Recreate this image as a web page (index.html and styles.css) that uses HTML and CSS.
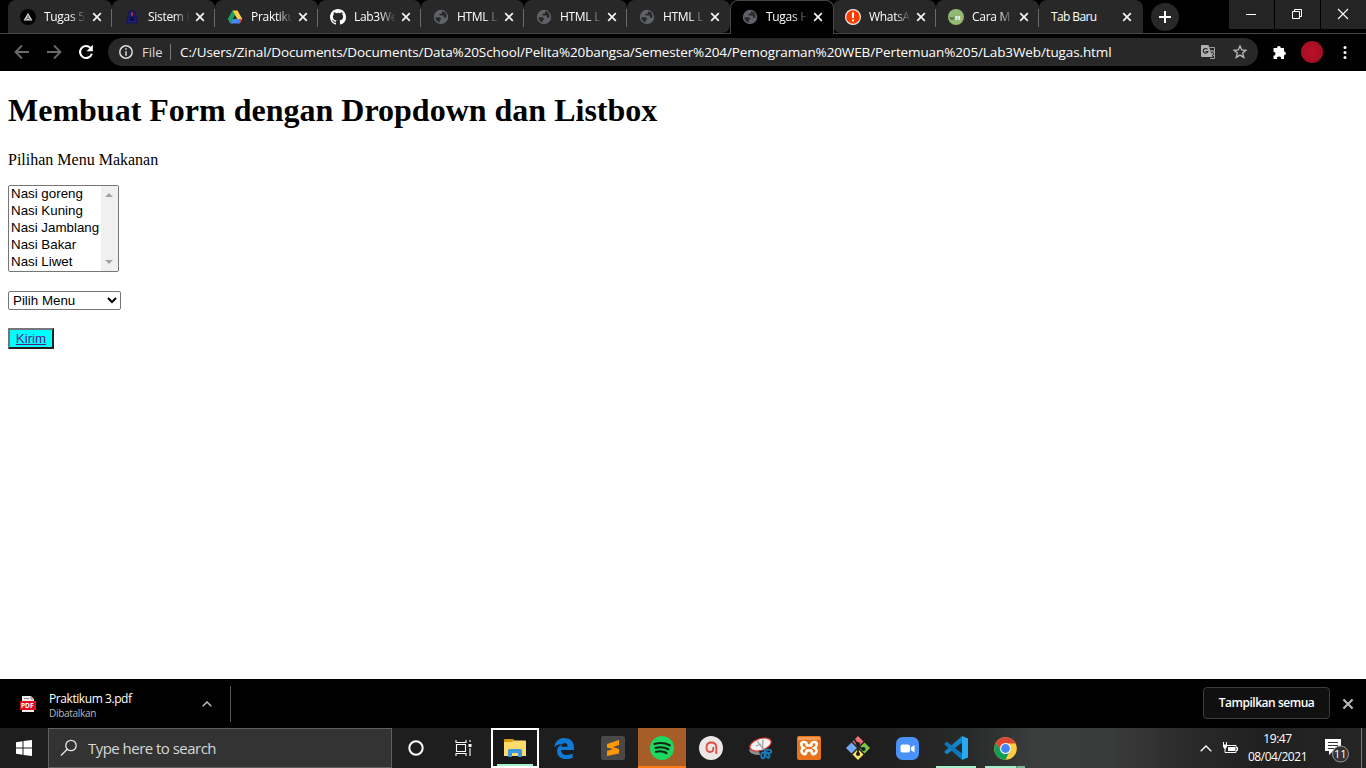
FILE: index.html
```html
<!DOCTYPE html>
<html lang="id">
<head>
<meta charset="utf-8">
<title>Tugas HTML</title>
<link rel="stylesheet" href="styles.css">
</head>
<body>
<svg class="defs" width="0" height="0">
  <symbol id="x" viewBox="0 0 10 10"><path d="M1.2 1.2l7.6 7.6M8.800 1.2L1.2 8.800" stroke="currentColor" stroke-width="1.700" fill="none"/></symbol>
  <symbol id="globe" viewBox="0 0 16 16"><circle cx="8" cy="8" r="7.200" fill="#5f6368"/><path d="M2.300 8.200h4q2.200.3 2.200 2.300H6.800v3q-4-1-4.500-5.300zM9 2.300v1.500q0 1-1.200 1H6.500v1.700h4.300v2.300h2.500q.8-4-2-5.800z" fill="#28282a"/></symbol>
</svg>
<header class="tabstrip">
  <div class="tabs">
    <div class="tab first"><svg class="fav" viewBox="0 0 16 16"><circle cx="8" cy="8" r="8" fill="#000"/><path d="M8 4l4.500 7.500h-9z" fill="#ddd"/><path d="M8 6.500v2.500M5.500 10.500L8 9l2.500 1.500" stroke="#333" stroke-width=".9" fill="none"/></svg><span class="title">Tugas 5</span><svg class="close"><use href="#x"/></svg></div>
    <div class="tab"><svg class="fav" viewBox="0 0 16 16"><path d="M8 1q5 1 5 7l1 6.500H2L3 8q0-6 5-7z" fill="#17175c"/><path d="M5 6q3-3 6 0M4 10l3-1M12 10L9 9M3 12.500h10" stroke="#23238a" fill="none"/><path d="M8 3v4" stroke="#b83126" stroke-width="1.600"/><circle cx="8" cy="10" r="1.800" fill="#070744"/></svg><span class="title">Sistem I</span><svg class="close"><use href="#x"/></svg></div>
    <div class="tab"><svg class="fav" viewBox="0 0 16 16"><path d="M5.500 1.500L.8 10l2.500 4.500L8 6z" fill="#1da462"/><path d="M5.500 1.500h5L15.300 10h-5z" fill="#ffcf48"/><path d="M5.700 10h9.600l-2.500 4.500H3.300z" fill="#4688f4"/><path d="M12 10h3.300l-2.500 4.500z" fill="#e94435"/></svg><span class="title">Praktiku</span><svg class="close"><use href="#x"/></svg></div>
    <div class="tab"><svg class="fav" viewBox="0 0 16 16"><path fill="#fff" d="M8 0C3.580 0 0 3.580 0 8c0 3.540 2.290 6.530 5.470 7.590.4.07.55-.17.55-.38 0-.19-.01-.82-.01-1.490-2.010.37-2.530-.49-2.690-.94-.09-.23-.48-.94-.82-1.130-.28-.15-.68-.52-.01-.53.63-.01 1.080.58 1.230.82.72 1.210 1.870.87 2.330.66.07-.52.28-.87.51-1.070-1.780-.2-3.640-.89-3.640-3.950 0-.87.31-1.590.82-2.150-.08-.2-.36-1.020.08-2.120 0 0 .67-.21 2.200.82a7.600 7.600 0 0 1 4 0c1.530-1.040 2.200-.82 2.200-.82.44 1.100.16 1.920.08 2.120.51.56.82 1.270.82 2.150 0 3.070-1.870 3.750-3.650 3.950.29.25.54.73.54 1.480 0 1.070-.01 1.930-.01 2.200 0 .21.15.46.55.38A8 8 0 0 0 16 8c0-4.420-3.580-8-8-8z"/></svg><span class="title">Lab3We</span><svg class="close"><use href="#x"/></svg></div>
    <div class="tab"><svg class="fav"><use href="#globe"/></svg><span class="title">HTML L</span><svg class="close"><use href="#x"/></svg></div>
    <div class="tab"><svg class="fav"><use href="#globe"/></svg><span class="title">HTML L</span><svg class="close"><use href="#x"/></svg></div>
    <div class="tab before-active"><svg class="fav"><use href="#globe"/></svg><span class="title">HTML L</span><svg class="close"><use href="#x"/></svg></div>
    <div class="tab active"><svg class="fav"><use href="#globe"/></svg><span class="title">Tugas H</span><svg class="close"><use href="#x"/></svg></div>
    <div class="tab after-active"><svg class="fav" viewBox="0 0 16 16"><circle cx="8" cy="8" r="7.400" fill="#ff3c00" stroke="#eee" stroke-width="1.200"/><path d="M8 3.500v5.500M8 10.500v2" stroke="#fff" stroke-width="2"/></svg><span class="title">WhatsA</span><svg class="close"><use href="#x"/></svg></div>
    <div class="tab"><svg class="fav" viewBox="0 0 16 16"><circle cx="8" cy="8" r="8" fill="#93b874"/><text x="1.500" y="10.500" class="wikih dark">w</text><text x="7" y="11" class="wikih">H</text></svg><span class="title">Cara M</span><svg class="close"><use href="#x"/></svg></div>
    <div class="tab last"><span class="title">Tab Baru</span><svg class="close"><use href="#x"/></svg></div>
  </div>
  <div class="newtab"><svg width="12" height="12"><path d="M6 0v12M0 6h12" stroke="#fff" stroke-width="2"/></svg></div>
  <div class="winbtns">
    <span><svg width="12" height="12"><path d="M1 6.500h10" stroke="#fff"/></svg></span>
    <span><svg width="12" height="12" fill="none" stroke="#fff"><path d="M1.500 3.500h7v7h-7zM3.500 3.500v-2h7v7h-2"/></svg></span>
    <span><svg width="12" height="12"><path d="M1 1l10 10M11 1L1 11" stroke="#fff" stroke-width="1.100"/></svg></span>
  </div>
</header>
<nav class="toolbar">
  <svg class="nav" viewBox="0 0 16 16"><path d="M15 8H2M8 1.500L1.500 8 8 14.500" stroke="#6b6b6b" stroke-width="1.800" fill="none"/></svg>
  <svg class="nav" viewBox="0 0 16 16"><path d="M1 8h13M8 1.500L14.500 8 8 14.500" stroke="#6b6b6b" stroke-width="1.800" fill="none"/></svg>
  <svg class="nav" viewBox="0 0 16 16"><path d="M12.500 4A6 6 0 1 0 13.800 9.800" stroke="#fff" stroke-width="2.100" fill="none"/><path d="M14.800.8v6.400H8.500z" fill="#fff"/></svg>
  <div class="omnibox">
    <svg class="info" width="14" height="14" fill="none" stroke="#ddd" stroke-width="1.500"><circle cx="7" cy="7" r="6.200"/><path d="M7 3.200v1.600M7 6.200v4.600"/></svg>
    <span class="scheme">File</span><i class="bar"></i>
    <span class="url">C:/Users/Zinal/Documents/Documents/Data%20School/Pelita%20bangsa/Semester%204/Pemograman%20WEB/Pertemuan%205/Lab3Web/tugas.html</span>
    <svg class="translate" width="15" height="15"><path d="M0 1q0-1 1-1h6.500l4 12H1q-1 0-1-1z" fill="#b0b0b0"/><path d="M8.500 2.500h5v11H9" fill="none" stroke="#a0a0a0"/><path d="M6.500 4.500a2.300 2.300 0 1 0 .3 2H4.500" stroke="#29292b" fill="none" stroke-width="1.200"/><path d="M9.500 6h3.500M11 5v1M12.500 6.500q-.6 2.500-2 3.500M10.500 8q1 2 2.500 2.800" stroke="#bbb" fill="none" stroke-width=".9"/></svg>
    <svg width="14" height="14" viewBox="0 0 14 14"><path d="M7 1l1.700 4 4.300.3-3.300 2.800 1.100 4.300L7 10.100l-3.800 2.300 1.100-4.300L1 5.300 5.300 5z" fill="none" stroke="#bdbdbd" stroke-width="1.300"/></svg>
  </div>
  <svg class="ext" width="15" height="15" viewBox="0 0 15 15"><path d="M2 3h3a1.900 1.900 0 1 1 3.800 0H12v3.400a1.900 1.900 0 1 1 0 3.800V14H9a2 2 0 1 0-3.900 0H1.500v-3.300a1.900 1.900 0 1 0 0-4V3z" fill="#fff"/></svg>
  <div class="avatar"></div>
  <svg class="dots" width="4" height="14" fill="#fff"><circle cx="2" cy="2.500" r="1.500"/><circle cx="2" cy="7.500" r="1.500"/><circle cx="2" cy="12.500" r="1.500"/></svg>
</nav>
<main class="page">
  <h1>Membuat Form dengan Dropdown dan Listbox</h1>
  <p class="label">Pilihan Menu Makanan</p>
  <div class="listbox">
    <ul><li>Nasi goreng</li><li>Nasi Kuning</li><li>Nasi Jamblang</li><li>Nasi Bakar</li><li>Nasi Liwet</li></ul>
    <div class="scroll"><svg width="8" height="4"><path d="M0 4l4-4 4 4z" fill="#a3a3a3"/></svg><svg width="8" height="4"><path d="M0 0l4 4 4-4z" fill="#a3a3a3"/></svg></div>
  </div>
  <select class="dropdown"><option>Pilih Menu</option></select>
  <button class="send"><a>Kirim</a></button>
</main>
<section class="downloads">
  <svg class="pdf" width="16" height="16"><path d="M2 0h9l3 3v13H2z" fill="#eee"/><path d="M11 0v3h3M4 2.500h5" stroke="#888" fill="none"/><rect y="5" width="16" height="9" fill="#e30b20"/><text x="1" y="12.300" class="pdftext">PDF</text></svg>
  <div class="file"><b>Praktikum 3.pdf</b><small>Dibatalkan</small></div>
  <svg class="up" width="10" height="6"><path d="M.7 5.300L5 1l4.300 4.300" stroke="#bbb" stroke-width="1.500" fill="none"/></svg>
  <i class="divider"></i>
  <button class="all">Tampilkan semua</button>
  <svg class="shelfclose"><use href="#x"/></svg>
</section>
<footer class="taskbar">
  <div class="start"><svg width="16" height="16" fill="#fff"><path d="M0 2.200L6.500 1.300v6.200H0zM7.500 1.100L16 0v7.500H7.500zM0 8.500h6.500v6.200L0 13.800zM7.500 8.500H16V16l-8.500-1.100z"/></svg></div>
  <div class="search"><svg width="18" height="18" fill="none" stroke="#e8e8e8" stroke-width="1.300"><circle cx="11" cy="6.500" r="5.200"/><path d="M7.200 10.300L1 16.500"/></svg><span>Type here to search</span></div>
  <div class="app"><svg width="16" height="16"><circle cx="8" cy="8" r="6.700" fill="none" stroke="#fff" stroke-width="2"/></svg></div>
  <div class="app view"><svg width="17" height="16" fill="none" stroke="#fff" stroke-width="1.100"><path d="M1 0v2.500h10V0M1 16v-2.500h10V16M1.500 4.500h9v7h-9zM15 0v2M15 8v8"/><path d="M13.500 4h3v3h-3z" fill="#fff" stroke="none"/></svg></div>
  <div class="app explorer"><svg width="22" height="18"><path d="M0 1q0-1 1-1h8l2 2.500h10V8H0z" fill="#d89b12"/><path d="M0 3h8l2-1.500h11q1 0 1 1V17H0z" fill="#ffdb6b"/><path d="M4 18v-6.500q0-1.500 1.500-1.500h11q1.500 0 1.500 1.500V18h-4v-4H8v4z" fill="#3a96dd"/></svg></div>
  <div class="app"><svg width="20" height="21" viewBox="0 0 20 21"><path d="M0 9.500Q1.500 0 10.500 0 20 .5 20 10v2H7q.4 5 5.600 5 3.400 0 6-1.600V20q-3 1.300-7 1.200-8.500-.7-8.600-8Q3.200 8.500 8 6 3 6.300 0 9.500zM7.200 8.800h6.600Q13.500 5 10.500 5 7.700 5.500 7.200 8.800z" fill="#0f7bd8" fill-rule="evenodd"/></svg></div>
  <div class="app"><svg width="24" height="24"><rect width="24" height="24" rx="2" fill="#494949"/><path d="M6 8l12-4v5l-6 2 6 2v4.500L6 20v-5l6-2-6-1.500z" fill="#ff9800"/></svg></div>
  <div class="app spotify"><svg width="24" height="24"><circle cx="12" cy="12" r="12" fill="#1ed760"/><path d="M4.500 8q8-2.500 15.200 1.300M5.500 12q7-2 12.800 1.200M6 15.800q6-1.500 10.500 1.200" stroke="#102516" stroke-width="2.200" stroke-linecap="round" fill="none"/></svg></div>
  <div class="app"><svg width="24" height="24"><circle cx="12" cy="12" r="12" fill="#ece7e5"/><path d="M17.300 18V11.500Q17.300 6.500 12.300 6.500 7.500 6.500 7.500 11.500 7.500 16 11 16 14.300 16 14.300 12.500V11" stroke="#e04e43" stroke-width="1.800" fill="none"/></svg></div>
  <div class="app"><svg width="25" height="23"><path d="M1 12q0 6 11 6l-1-4z" fill="#8d8d8d"/><ellipse cx="12.500" cy="7.500" rx="11" ry="5.800" transform="rotate(-18 12.500 7.500)" fill="#f4f4f4" stroke="#d43434" stroke-width="1.200"/><path d="M9 4l7 9M15 2.500l-.5 11M8 9l5-2" stroke="#999" stroke-width="1.200"/><g fill="none" stroke="#157dbe" stroke-width="1.800"><ellipse cx="20" cy="14.500" rx="3.300" ry="1.800"/><ellipse cx="15" cy="18.500" rx="1.800" ry="2.800"/><ellipse cx="19.300" cy="18" rx="1.600" ry="3" transform="rotate(-30 19.300 18)"/></g></svg></div>
  <div class="app"><svg width="24" height="24"><rect width="24" height="24" rx="2" fill="#e9731d"/><path d="M1 1h22v3H1z" fill="#f49b58"/><path d="M9 9.500h6M9 14.500h6M9.500 10q1-4-2.500-4T4.500 9q0 2 2 3-2 1-2 3t2.500 3 2.500-4M14.500 10q-1-4 2.500-4t2.500 3q0 2-2 3 2 1 2 3T17 18t-2.500-4" stroke="#fff" stroke-width="2.600" fill="none"/></svg></div>
  <div class="app"><svg width="24" height="24"><path d="M12 0l5.500 5.500L12 11 6.500 5.500z" fill="#f06f72"/><path d="M5.500 6.500L11 12l-5.500 5.500L0 12z" fill="#74a9f6"/><path d="M18.500 6.500L24 12l-5.500 5.500L13 12z" fill="#79c94d"/><path d="M12 13l5.500 5.500L12 24l-5.500-5.500z" fill="#ffe16b"/><path d="M8 3l4 6v10M12 10l6 4" stroke="#222" stroke-width="1.800" fill="none"/><g fill="#1c1c1c"><circle cx="12" cy="8" r="2"/><circle cx="12" cy="18" r="2"/><circle cx="17.500" cy="13" r="2"/></g></svg></div>
  <div class="app"><svg width="23" height="23"><rect width="23" height="23" rx="6.500" fill="#4b91fa"/><rect x="4.500" y="7.500" width="9.500" height="8" rx="2" fill="#fff"/><path d="M14.800 10.500L18.500 8v7.500l-3.700-2.500z" fill="#fff"/></svg></div>
  <div class="app running"><svg width="24" height="24"><path d="M18 0v6.500L3 18.200 0 16z" fill="#1684c9"/><path d="M0 8l3-2.200L18 17.500V24z" fill="#0d77ba"/><path d="M18 0l6 2.500v19L18 24z" fill="#29a9f0"/></svg></div>
  <div class="app running chrome"><svg width="23" height="23" viewBox="-11.500 -11.500 23 23"><circle r="11.300" fill="#ffcd42"/><path d="M0-5h10.100A11.300 11.300 0 0 0-9.800-5.600L-4.300 2.500z" fill="#db4637"/><path d="M-9.800-5.600A11.300 11.300 0 0 0 0 11.300L4.300 2.500h-8.600z" fill="#109d59"/><circle r="5.500" fill="#f4f4f4"/><circle r="4.400" fill="#4285f4"/></svg></div>
  <div class="tray">
    <svg class="chev" width="12" height="7"><path d="M.7 6.300L6 1l5.300 5.300" stroke="#fff" stroke-width="1.300" fill="none"/></svg>
    <svg class="battery" width="17" height="12"><path d="M4.500 3.500h9.500v7H5M14 5.500h1.500v3H14" stroke="#fff" fill="none"/><path d="M6 5h7v4H6zM1 2.500h4v3H4L3.500 7h-1L2 5.500H1z" fill="#fff"/><path d="M1.500 0v3M4.500 0v3M3 6v4.500h2" stroke="#fff" fill="none"/></svg>
    <div class="clock"><span>19:47</span><span class="date">08/04/2021</span></div>
    <svg class="notify" width="26" height="26"><path d="M1 2h16v12H9l-4 4v-4H1z" fill="#fff"/><path d="M4 5.500h10M4 8.500h10M4 11.500h6" stroke="#333"/><circle cx="16.500" cy="17" r="8" fill="#343434" stroke="#999"/><text x="16.300" y="21" class="count">11</text></svg>
  </div>
</footer>
</body>
</html>
```
FILE: styles.css
```css
* { box-sizing: border-box; }
body { margin: 0; width: 1366px; height: 768px; overflow: hidden; display: flex; flex-direction: column; background: #fff; font-family: "Open Sans", "Noto Sans", sans-serif; font-size: 12px; color: #fff; }
svg { display: block; flex: none; }
.defs { position: absolute; }

.tabstrip { height: 34px; background: #000; display: flex; border-bottom: 1px solid #464646; padding-left: 8px; flex: none; }
.tabs { display: flex; height: 34px; }
.tab { width: 103px; height: 33px; background: #282828; border-radius: 8px 8px 0 0; display: flex; align-items: center; padding-left: 12px; position: relative; }
.tab.first { width: 104px; }
.tab::after { content: ""; position: absolute; right: 0; top: 9px; width: 1px; height: 18px; background: #6a6a6a; }
.tab.active { background: #000; border: 1px solid #464646; border-bottom: 0; height: 34px; width: 104px; margin-right: -1px; padding: 0 0 1px 11px; z-index: 1; }
.before-active { border-bottom-right-radius: 8px; }
.after-active { border-bottom-left-radius: 8px; }
.tab.active::after, .tab.before-active::after, .tab.last::after { display: none; }
.tab.last { width: 104px; padding-left: 12px; }
.fav { width: 16px; height: 16px; }
.title { margin-left: 8px; width: 45px; height: 18px; line-height: 18px; white-space: nowrap; letter-spacing: -.3px; -webkit-mask-image: linear-gradient(90deg, #000 58%, transparent 93%); mask-image: linear-gradient(90deg, #000 58%, transparent 93%); }
.last .title { margin: 0; width: 71px; letter-spacing: -.6px; -webkit-mask-image: none; mask-image: none; }
.close { width: 10px; height: 10px; margin-left: 2px; color: #f4f4f4; }
.first .close { margin-left: 3px; }
.last .close { margin-left: 0; }
.wikih { font: bold 7px "Liberation Serif", serif; fill: #fff; }
.wikih.dark { fill: #3e5533; }
.newtab { width: 28px; height: 28px; border-radius: 50%; background: #282828; margin: 3px 0 0 8px; display: flex; align-items: center; justify-content: center; }
.winbtns { margin-left: auto; display: flex; gap: 1px; }
.winbtns span { width: 45px; height: 29px; background: #242424; display: flex; align-items: center; justify-content: center; padding: 0 2px 1px 0; }

.toolbar { height: 37px; background: #000; display: flex; align-items: center; padding: 0 0 1px 14px; flex: none; }
.nav { width: 16px; height: 16px; margin-right: 16px; }
.nav:nth-child(3) { margin-right: 14px; }
.omnibox { width: 1150px; height: 28px; border-radius: 14px; background: #282828; display: flex; align-items: center; padding: 0 11px; }
.scheme { margin-left: 9px; width: 28px; font-size: 13px; color: #ddd; }
.bar { width: 1px; height: 16px; background: #777; margin-right: 9px; }
.url { width: 1021px; white-space: nowrap; font-size: 13.5px; letter-spacing: -.115px; }
.translate { margin-right: 17px; }
.ext { margin-left: 14px; }
.avatar { width: 22px; height: 22px; border-radius: 50%; background: radial-gradient(#bb1128, #9e0d22); margin-left: 14px; }
.dots { margin-left: 20px; }

.page { height: 608px; color: #000; padding: 21px 8px 0; font-family: "Liberation Serif", serif; flex: none; display: flex; flex-direction: column; align-items: flex-start; }
h1 { margin: 0; font-size: 32px; line-height: 37px; }
.label { margin: 22px 0 16px; font-size: 16px; line-height: 18px; }
.listbox { display: flex; width: 111px; height: 87px; border: 1px solid #767676; border-radius: 2px; font: 13.333px "Liberation Sans", sans-serif; }
.listbox ul { list-style: none; margin: 0; padding: 0 0 0 2px; width: 92px; }
.listbox li { height: 17px; line-height: 16px; white-space: nowrap; }
.scroll { width: 17px; background: #f0f0f0; display: flex; flex-direction: column; align-items: center; justify-content: space-between; padding: 7px 1px 7px 0; }
.dropdown { margin: 19px 0 18px; width: 113px; height: 19px; padding: 0; font: 13.333px "Liberation Sans", sans-serif; border: 1px solid #767676; border-radius: 2px; background-color: #fff; color: #000; }
.send { width: 46px; height: 21px; padding: 0; background: #0ff; border: 2px solid; border-color: #767676 #212121 #212121 #767676; font: 13.333px "Liberation Sans", sans-serif; line-height: 16px; color: #551a8b; text-decoration: underline; }

.downloads { height: 49px; background: #000; display: flex; align-items: center; padding-left: 20px; flex: none; }
.file { margin-left: 13px; padding-top: 4px; width: 153px; display: flex; flex-direction: column; line-height: 15px; }
.file b { font-weight: 400; letter-spacing: -.43px; }
.file small { font-size: 10px; color: #bbb; line-height: 14px; letter-spacing: -.3px; }
.pdftext { font: bold 6.500px "Open Sans", sans-serif; fill: #fff; }
.divider { width: 1px; height: 36px; background: #555; margin-left: 18px; }
.all { margin-left: auto; width: 127px; height: 32px; margin-bottom: 2px; padding: 0; border: 1px solid #3c3c3c; border-radius: 4px; background: #101010; color: #fff; font: 600 12px "Open Sans", sans-serif; letter-spacing: -.47px; }
.shelfclose { width: 12px; height: 12px; color: #bbb; margin: 0 12px; }

.taskbar { height: 40px; display: flex; flex: none; background: linear-gradient(90deg, #1e1e1e 0, #1e1e1e 870px, #292a2a 970px, #3c3e3e 1035px, #3a3b3b 1110px, #2a2a2a 1190px, #202020 1260px, #252525 100%); }
.start { width: 48px; display: flex; align-items: center; justify-content: center; }
.search { width: 344px; border: 1px solid #606060; background: #333; display: flex; align-items: center; padding-left: 11px; font-size: 15px; color: #d8d8d8; }
.search span { margin-left: 10px; letter-spacing: -.53px; }
.app { width: 48px; margin-right: 1px; display: flex; align-items: center; justify-content: center; }
.app:nth-child(3) { margin-right: 0; }
.app.view { margin-right: 3px; padding-right: 1px; }
.explorer { border: 2px solid #fff; background: linear-gradient(#a5f0c9, #a5f0c9) center bottom / 36px 2px no-repeat #181818; }
.spotify { background: #a75d28; border-bottom: 2px solid #ff7a12; padding-top: 2px; }
.running { background: linear-gradient(#a5f0c9, #a5f0c9) center bottom / 40px 2px no-repeat; }
.chrome { background: linear-gradient(90deg, #a5f0c9 31px, #568c72 31px, #7eb498 33px) center bottom / 40px 2px no-repeat; }
.tray { margin-left: auto; display: flex; align-items: center; border-right: 1px solid #777; margin-right: 4px; }
.chev { margin-right: 10px; }
.clock { width: 78px; display: flex; flex-direction: column; align-items: center; line-height: 18px; letter-spacing: -.45px; padding-right: 1px; }
.notify { margin: 3px 11px 0 7px; }
.count { font: 11px "Open Sans", sans-serif; fill: #fff; text-anchor: middle; }
```
